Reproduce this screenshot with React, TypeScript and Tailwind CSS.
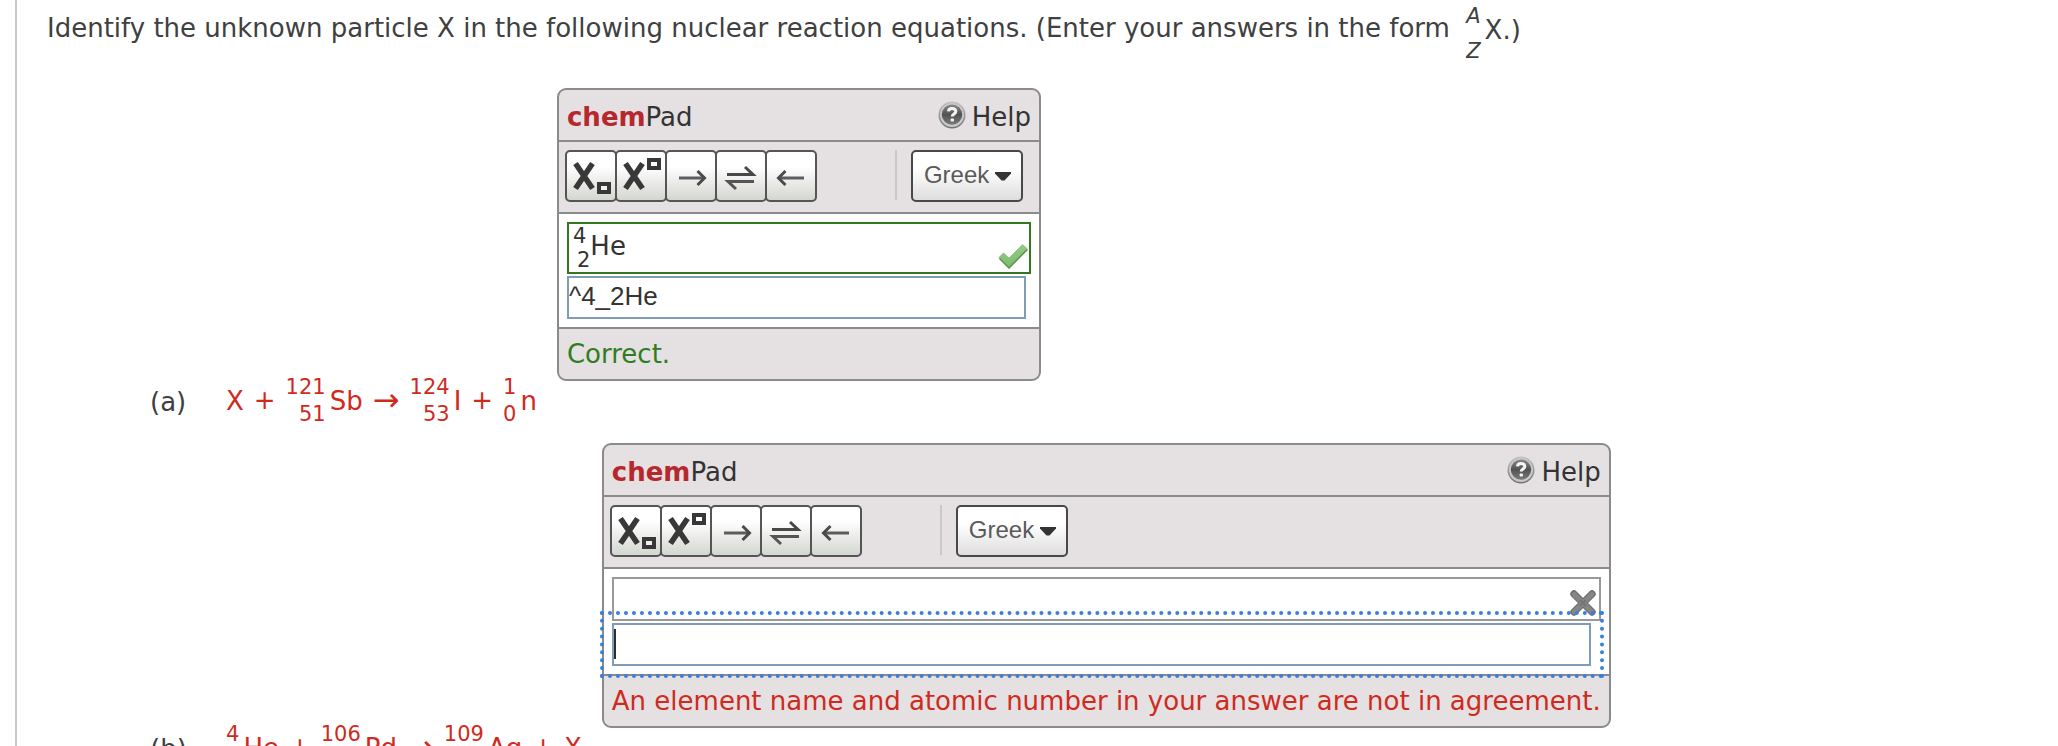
import type { ReactNode } from "react";

type Status = "correct" | "incorrect";

function Isotope({
  mass,
  number,
  symbol,
}: {
  mass: string;
  number: string;
  symbol: string;
}) {
  return (
    <span className="inline-flex items-center gap-1">
      <span className="flex flex-col items-end pt-0.5 text-[21px] leading-[27px]">
        <span>{mass}</span>
        <span>{number}</span>
      </span>
      <span className="pt-0.5">{symbol}</span>
    </span>
  );
}

function Arrow() {
  return <span className="text-[32px]">→</span>;
}

function HelpIcon() {
  return (
    <svg viewBox="0 0 28 28" className="size-7" aria-hidden="true">
      <defs>
        <linearGradient id="helpRing" x1="0" y1="0" x2="0" y2="1">
          <stop offset="0" stopColor="#c4c4c4" />
          <stop offset="1" stopColor="#707070" />
        </linearGradient>
        <linearGradient id="helpDisc" x1="0" y1="0" x2="0" y2="1">
          <stop offset="0" stopColor="#8a8a8a" />
          <stop offset="0.5" stopColor="#525252" />
          <stop offset="1" stopColor="#7a7a7a" />
        </linearGradient>
      </defs>
      <circle cx="14" cy="14" r="13.5" fill="url(#helpRing)" />
      <circle cx="14" cy="14" r="12" fill="#c9c9c9" />
      <circle cx="14" cy="13.6" r="10.2" fill="url(#helpDisc)" />
      <path
        d="M10.4 10.4c.2-2.100 1.600-3 3.600-3 2.300 0 3.800 1.100 3.800 3 0 2.500-3.600 2.600-3.600 5.200"
        fill="none"
        stroke="#f4f4f4"
        strokeWidth="3"
      />
      <rect x="12.600" y="17.600" width="3.400" height="3" rx="1" fill="#f4f4f4" />
    </svg>
  );
}

function CheckIcon() {
  return (
    <svg viewBox="0 0 30 25" className="h-[25px] w-[30px]" role="img" aria-label="Correct">
      <defs>
        <linearGradient id="checkFill" x1="0" y1="0" x2="0" y2="1">
          <stop offset="0" stopColor="#93cc85" />
          <stop offset="1" stopColor="#7cba6d" />
        </linearGradient>
      </defs>
      <path
        d="M1 13.500 5.500 9l5.500 5.200L24.500.8 29.500 5 11 24z"
        fill="url(#checkFill)"
        stroke="#86bb78"
        strokeWidth="1"
        strokeLinejoin="round"
      />
      <path d="M1.500 14.500 11 24 29.200 5.600" fill="none" stroke="#5f9152" strokeWidth="1.500" />
    </svg>
  );
}

function CrossIcon() {
  return (
    <svg viewBox="0 0 26 26" className="size-[26px]" role="img" aria-label="Incorrect">
      <path d="M4 4 22 22M22 4 4 22" stroke="#707070" strokeWidth="7.400" strokeLinecap="round" />
      <path d="M4.200 4.200 21.800 21.800M21.800 4.200 4.200 21.800" stroke="#868686" strokeWidth="4.800" strokeLinecap="round" />
      <path d="M10 10 16 16M16 10 10 16" stroke="#747474" strokeWidth="2" />
    </svg>
  );
}

function ToolButton({ label, children }: { label: string; children: ReactNode }) {
  return (
    <button
      type="button"
      aria-label={label}
      className="-ml-0.5 size-[52px] rounded-[5px] border-2 border-[#555] bg-linear-to-b from-white from-30% to-[#d4d6d0]"
    >
      <svg viewBox="0 0 48 48" className="size-12" aria-hidden="true">
        {children}
      </svg>
    </button>
  );
}

function Tools() {
  return (
    <div className="flex pl-0.5">
      <ToolButton label="Subscript">
        <path d="M8.500 11.500 25.500 36.500M25.500 11.500 8.500 36.500" stroke="#383838" strokeWidth="5.600" />
        <rect x="32" y="32" width="10" height="8" fill="#f0f0ee" stroke="#383838" strokeWidth="4" />
      </ToolButton>
      <ToolButton label="Superscript">
        <path d="M8.500 11.500 25.500 36.500M25.500 11.500 8.500 36.500" stroke="#383838" strokeWidth="5.600" />
        <rect x="32" y="8" width="10" height="8" fill="#fff" stroke="#383838" strokeWidth="4" />
      </ToolButton>
      <ToolButton label="Right arrow">
        <path d="M12 26H37" stroke="#5c5c5c" strokeWidth="3" />
        <path d="M30.500 19 37.500 26 30.500 33" fill="none" stroke="#4a4a4a" strokeWidth="3" />
      </ToolButton>
      <ToolButton label="Equilibrium arrow">
        <path d="M10 22.500H36L28 15" fill="none" stroke="#484848" strokeWidth="3" />
        <path d="M37 29.500H11L19 37" fill="none" stroke="#555" strokeWidth="3" />
      </ToolButton>
      <ToolButton label="Left arrow">
        <path d="M12 26H37" stroke="#5c5c5c" strokeWidth="3" />
        <path d="M18.500 19 11.500 26 18.500 33" fill="none" stroke="#4a4a4a" strokeWidth="3" />
      </ToolButton>
    </div>
  );
}

function ChemPad({
  id,
  status,
  value,
  preview,
  message,
  focused = false,
}: {
  id: string;
  status: Status;
  value: string;
  preview?: ReactNode;
  message: string;
  focused?: boolean;
}) {
  const correct = status === "correct";
  return (
    <section className="mb-[47px] shrink-0 rounded-[9px] border-2 border-[#8b8b8b] bg-[#e5e0e1] text-[#333]">
      <header className="flex h-[50px] items-center justify-between px-2">
        <h2 className="pt-1">
          <b className="text-[#b5282e]">chem</b>Pad
        </h2>
        <a href="#help" className="flex items-center gap-1.5">
          <HelpIcon />
          <span className="pt-1">Help</span>
        </a>
      </header>

      <div className="flex h-[74px] items-start border-y-2 border-[#8b8b8b] pt-2 pr-4 pl-1.5">
        <Tools />
        <div className="ml-[78px] h-[50px] w-0.5 bg-[#c8c8c8]" />
        <div className="relative ml-3.5">
          <select
            aria-label="Greek letters"
            className="block h-[52px] w-28 appearance-none rounded-[5px] border-2 border-[#484848] bg-linear-to-b from-white from-35% to-[#dfdddd] pb-0.5 pl-[11px] font-['Liberation_Sans',Arial,sans-serif] text-2xl text-[#5a5a5a]"
          >
            <option>Greek</option>
          </select>
          <svg viewBox="0 0 16 9" className="pointer-events-none absolute top-[22px] right-3 h-[9px] w-4" aria-hidden="true">
            <path d="M0 0H16V1.500L9.500 8.500H6.500L0 1.500z" fill="#333" />
          </svg>
        </div>
      </div>

      <div className="relative bg-white px-2 pt-2 pb-2">
        <div
          className={
            correct
              ? "relative h-[52px] border-2 border-[#33771f] pl-1"
              : "relative h-11 border-2 border-[#999]"
          }
        >
          {preview}
          <span className={correct ? "absolute right-px bottom-[3px] flex" : "absolute right-[3px] bottom-[3px] flex"}>
            {correct ? <CheckIcon /> : <CrossIcon />}
          </span>
        </div>
        <div className="relative mt-0.5">
          <input
            id={id}
            type="text"
            aria-label="Answer"
            autoFocus={focused}
            defaultValue={value}
            className="block h-[43px] w-[99%] border-2 border-[#7f9db9] bg-white pb-0.5 font-['Liberation_Sans',Arial,sans-serif] text-[26px] caret-transparent outline-none"
          />
          {focused && <span className="pointer-events-none absolute top-1.5 left-0.5 h-[30px] w-0.5 bg-[#2b2f33]" />}
        </div>
        {focused && (
          <div className="pointer-events-none absolute top-[42px] right-[5px] -bottom-1 -left-1 border-4 border-dotted border-[#3a7fe0]" />
        )}
      </div>

      <footer
        className={
          correct
            ? "flex h-[52px] items-center rounded-b-[7px] border-t-2 border-[#8b8b8b] px-2 text-[#2f7d1f]"
            : "flex h-[52px] items-center rounded-b-[7px] border-t-2 border-[#8b8b8b] px-2 text-[#cf2a1e]"
        }
      >
        {message}
      </footer>
    </section>
  );
}

function Part({ label, equation, children }: { label: string; equation: ReactNode; children: ReactNode }) {
  return (
    <li className="flex items-end">
      <span className="w-[76px] py-2.5">{label}</span>
      <div className="mr-5 flex items-center gap-2.5 whitespace-nowrap text-[#cf2a1e]">{equation}</div>
      {children}
    </li>
  );
}

export default function App() {
  return (
    <main className="h-screen overflow-hidden bg-white pl-[15px] font-['DejaVu_Sans',Verdana,sans-serif] text-[26px] leading-8 text-[#404040]">
      <div className="h-full border-l-2 border-[#c8c8c8] pl-[30px]">
        <p className="flex h-[88px] items-center pb-8 whitespace-pre">
          Identify the unknown particle X in the following nuclear reaction equations. (Enter your answers in the form{" "}
          <span className="ml-2 inline-flex items-center gap-1">
            <span className="flex flex-col pt-3 text-[21px] leading-[35px] italic">
              <span>A</span>
              <span>Z</span>
            </span>
            <span className="pt-1">X.)</span>
          </span>
        </p>

        <ol className="flex flex-col gap-[15px] pl-[103px]">
          <Part
            label="(a)"
            equation={
              <>
                <span className="pt-0.5">X</span>
                <span>+</span>
                <Isotope mass="121" number="51" symbol="Sb" />
                <Arrow />
                <Isotope mass="124" number="53" symbol="I" />
                <span>+</span>
                <Isotope mass="1" number="0" symbol="n" />
              </>
            }
          >
            <ChemPad
              id="answer-a"
              status="correct"
              value="^4_2He"
              message="Correct."
              preview={
                <span className="flex h-12 items-center">
                  <span className="flex flex-col text-[21px] leading-6">
                    <span>4</span>
                    <span className="pl-1">2</span>
                  </span>
                  <span className="-mt-1">He</span>
                </span>
              }
            />
          </Part>
          <Part
            label="(b)"
            equation={
              <>
                <Isotope mass="4" number="2" symbol="He" />
                <span>+</span>
                <Isotope mass="106" number="46" symbol="Pd" />
                <Arrow />
                <Isotope mass="109" number="47" symbol="Ag" />
                <span>+</span>
                <span className="pt-0.5">X</span>
              </>
            }
          >
            <ChemPad
              id="answer-b"
              status="incorrect"
              value=""
              message="An element name and atomic number in your answer are not in agreement."
              focused
            />
          </Part>
        </ol>
      </div>
    </main>
  );
}
